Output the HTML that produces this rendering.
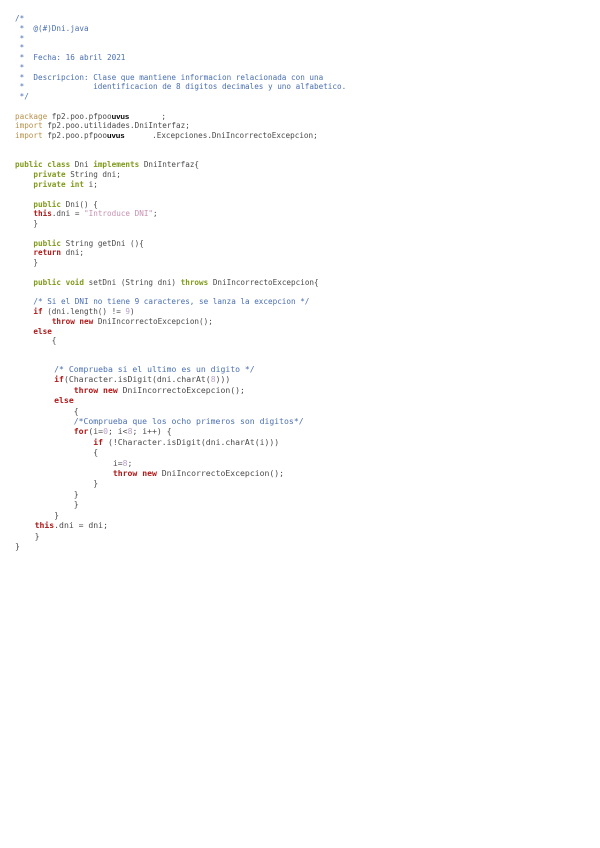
<!DOCTYPE html>
<html><head><meta charset="utf-8"><style>
html,body{margin:0;padding:0;background:#fff;width:600px;height:848px;overflow:hidden}
pre{position:absolute;left:15px;margin:0;font-family:"DejaVu Sans Mono","Liberation Mono",monospace;font-size:7.65px;color:#4a4a4a;}
#a{top:14px;line-height:9.76px}
#b{top:364px;line-height:10.4px;font-size:8.15px}
.c{color:#4a6fb0}
.k{color:#7f9a1a;font-weight:bold}
.r{color:#b01818;font-weight:bold}
.p{color:#b8904a}
.s{color:#c890b0}
.n{color:#b8a0c8}
.u{font-family:"Liberation Sans",sans-serif;font-weight:bold;color:#000;font-size:7.5px}
</style></head><body>
<pre id="a"><span class="c">/*
 *  @(#)Dni.java
 *
 *
 *  Fecha: 16 abril 2021
 *
 *  Descripcion: Clase que mantiene informacion relacionada con una
 *               identificacion de 8 digitos decimales y uno alfabetico.
 */</span>

<span class="p">package</span> fp2.poo.pfpoo<span class="u">uvus</span>       ;
<span class="p">import</span> fp2.poo.utilidades.DniInterfaz;
<span class="p">import</span> fp2.poo.pfpoo<span class="u">uvus</span>      .Excepciones.DniIncorrectoExcepcion;


<span class="k">public class</span> Dni <span class="k">implements</span> DniInterfaz{
    <span class="k">private</span> String dni;
    <span class="k">private int</span> i;

    <span class="k">public</span> Dni() {
    <span class="r">this</span>.dni = <span class="s">"Introduce DNI"</span>;
    }

    <span class="k">public</span> String getDni (){
    <span class="r">return</span> dni;
    }

    <span class="k">public void</span> setDni (String dni) <span class="k">throws</span> DniIncorrectoExcepcion{

    <span class="c">/* Si el DNI no tiene 9 caracteres, se lanza la excepcion */</span>
    <span class="r">if</span> (dni.length() != <span class="n">9</span>)
        <span class="r">throw new</span> DniIncorrectoExcepcion();
    <span class="r">else</span>
        {
</pre>
<pre id="b">        <span class="c">/* Comprueba si el ultimo es un digito */</span>
        <span class="r">if</span>(Character.isDigit(dni.charAt(<span class="n">8</span>)))
            <span class="r">throw new</span> DniIncorrectoExcepcion();
        <span class="r">else</span>
            {
            <span class="c">/*Comprueba que los ocho primeros son digitos*/</span>
            <span class="r">for</span>(i=<span class="n">0</span>; i&lt;<span class="n">8</span>; i++) {
                <span class="r">if</span> (!Character.isDigit(dni.charAt(i)))
                {
                    i=<span class="n">8</span>;
                    <span class="r">throw new</span> DniIncorrectoExcepcion();
                }
            }
            }
        }
    <span class="r">this</span>.dni = dni;
    }
}
</pre>
</body></html>
